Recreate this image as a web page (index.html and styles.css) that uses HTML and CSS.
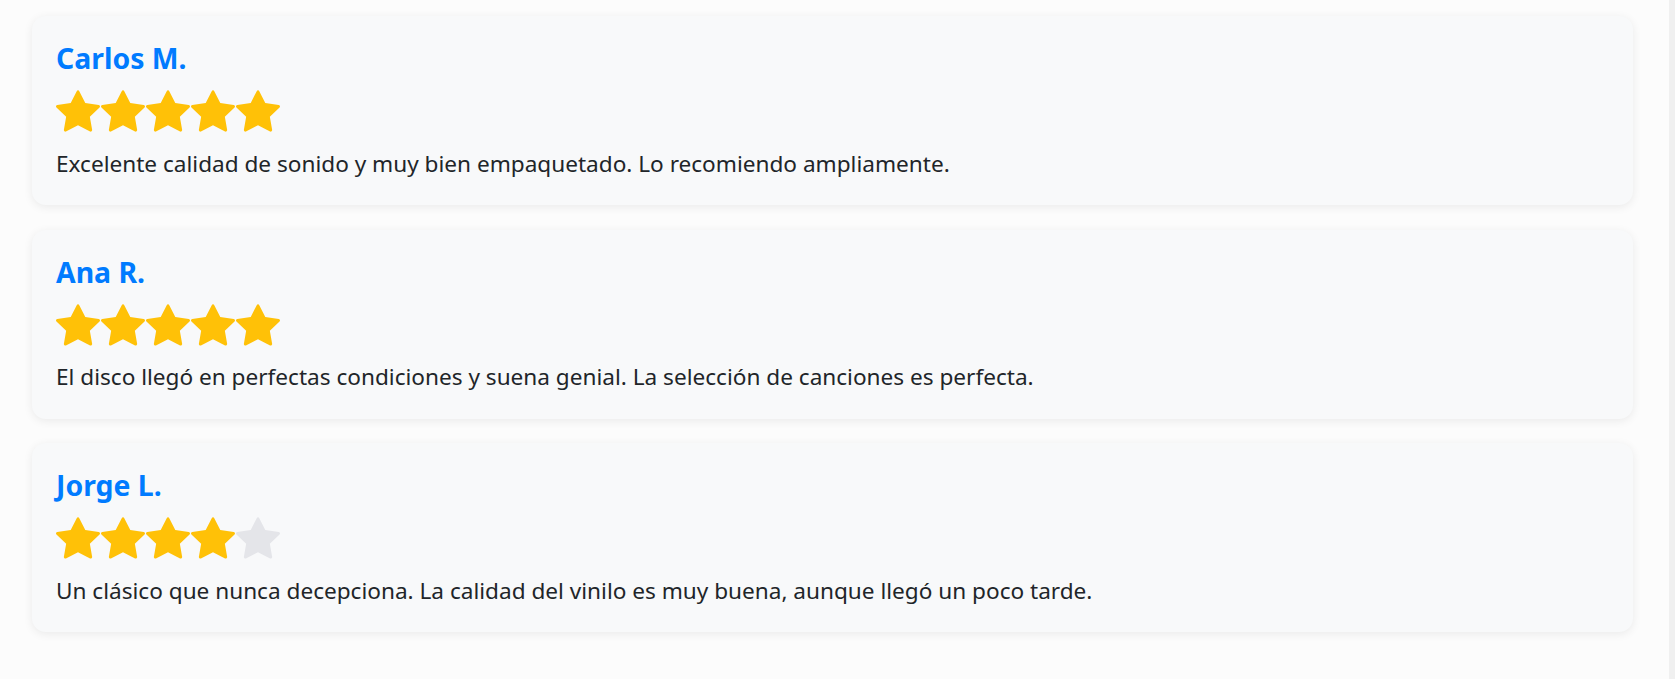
FILE: index.html
```html
<!DOCTYPE html>
<html lang="es">
<head>
<meta charset="utf-8">
<title>Reseñas</title>
<link rel="stylesheet" href="styles.css">
</head>
<body>
<div class="page">
  <main class="reviews">
    <article class="review">
      <h3 class="review-name">Carlos M.</h3>
      <div class="stars">
        <svg class="star on" viewBox="0 0 16 16"><path d="M3.612 15.443c-.386.198-.824-.149-.746-.592l.83-4.73L.173 6.765c-.329-.314-.158-.888.283-.95l4.898-.696L7.538.792c.197-.39.73-.39.927 0l2.184 4.327 4.898.696c.441.062.612.636.282.95l-3.522 3.356.83 4.73c.078.443-.36.79-.746.592L8 13.187l-4.389 2.256z"/></svg>
        <svg class="star on" viewBox="0 0 16 16"><path d="M3.612 15.443c-.386.198-.824-.149-.746-.592l.83-4.73L.173 6.765c-.329-.314-.158-.888.283-.95l4.898-.696L7.538.792c.197-.39.73-.39.927 0l2.184 4.327 4.898.696c.441.062.612.636.282.95l-3.522 3.356.83 4.73c.078.443-.36.79-.746.592L8 13.187l-4.389 2.256z"/></svg>
        <svg class="star on" viewBox="0 0 16 16"><path d="M3.612 15.443c-.386.198-.824-.149-.746-.592l.83-4.73L.173 6.765c-.329-.314-.158-.888.283-.95l4.898-.696L7.538.792c.197-.39.73-.39.927 0l2.184 4.327 4.898.696c.441.062.612.636.282.95l-3.522 3.356.83 4.73c.078.443-.36.79-.746.592L8 13.187l-4.389 2.256z"/></svg>
        <svg class="star on" viewBox="0 0 16 16"><path d="M3.612 15.443c-.386.198-.824-.149-.746-.592l.83-4.73L.173 6.765c-.329-.314-.158-.888.283-.95l4.898-.696L7.538.792c.197-.39.73-.39.927 0l2.184 4.327 4.898.696c.441.062.612.636.282.95l-3.522 3.356.83 4.73c.078.443-.36.79-.746.592L8 13.187l-4.389 2.256z"/></svg>
        <svg class="star on" viewBox="0 0 16 16"><path d="M3.612 15.443c-.386.198-.824-.149-.746-.592l.83-4.73L.173 6.765c-.329-.314-.158-.888.283-.95l4.898-.696L7.538.792c.197-.39.73-.39.927 0l2.184 4.327 4.898.696c.441.062.612.636.282.95l-3.522 3.356.83 4.73c.078.443-.36.79-.746.592L8 13.187l-4.389 2.256z"/></svg>
      </div>
      <p class="review-text">Excelente calidad de sonido y muy bien empaquetado. Lo recomiendo ampliamente.</p>
    </article>
    <article class="review">
      <h3 class="review-name">Ana R.</h3>
      <div class="stars">
        <svg class="star on" viewBox="0 0 16 16"><path d="M3.612 15.443c-.386.198-.824-.149-.746-.592l.83-4.73L.173 6.765c-.329-.314-.158-.888.283-.95l4.898-.696L7.538.792c.197-.39.73-.39.927 0l2.184 4.327 4.898.696c.441.062.612.636.282.95l-3.522 3.356.83 4.73c.078.443-.36.79-.746.592L8 13.187l-4.389 2.256z"/></svg>
        <svg class="star on" viewBox="0 0 16 16"><path d="M3.612 15.443c-.386.198-.824-.149-.746-.592l.83-4.73L.173 6.765c-.329-.314-.158-.888.283-.95l4.898-.696L7.538.792c.197-.39.73-.39.927 0l2.184 4.327 4.898.696c.441.062.612.636.282.95l-3.522 3.356.83 4.73c.078.443-.36.79-.746.592L8 13.187l-4.389 2.256z"/></svg>
        <svg class="star on" viewBox="0 0 16 16"><path d="M3.612 15.443c-.386.198-.824-.149-.746-.592l.83-4.73L.173 6.765c-.329-.314-.158-.888.283-.95l4.898-.696L7.538.792c.197-.39.73-.39.927 0l2.184 4.327 4.898.696c.441.062.612.636.282.95l-3.522 3.356.83 4.73c.078.443-.36.79-.746.592L8 13.187l-4.389 2.256z"/></svg>
        <svg class="star on" viewBox="0 0 16 16"><path d="M3.612 15.443c-.386.198-.824-.149-.746-.592l.83-4.73L.173 6.765c-.329-.314-.158-.888.283-.95l4.898-.696L7.538.792c.197-.39.73-.39.927 0l2.184 4.327 4.898.696c.441.062.612.636.282.95l-3.522 3.356.83 4.73c.078.443-.36.79-.746.592L8 13.187l-4.389 2.256z"/></svg>
        <svg class="star on" viewBox="0 0 16 16"><path d="M3.612 15.443c-.386.198-.824-.149-.746-.592l.83-4.73L.173 6.765c-.329-.314-.158-.888.283-.95l4.898-.696L7.538.792c.197-.39.73-.39.927 0l2.184 4.327 4.898.696c.441.062.612.636.282.95l-3.522 3.356.83 4.73c.078.443-.36.79-.746.592L8 13.187l-4.389 2.256z"/></svg>
      </div>
      <p class="review-text">El disco llegó en perfectas condiciones y suena genial. La selección de canciones es perfecta.</p>
    </article>
    <article class="review">
      <h3 class="review-name">Jorge L.</h3>
      <div class="stars">
        <svg class="star on" viewBox="0 0 16 16"><path d="M3.612 15.443c-.386.198-.824-.149-.746-.592l.83-4.73L.173 6.765c-.329-.314-.158-.888.283-.95l4.898-.696L7.538.792c.197-.39.73-.39.927 0l2.184 4.327 4.898.696c.441.062.612.636.282.95l-3.522 3.356.83 4.73c.078.443-.36.79-.746.592L8 13.187l-4.389 2.256z"/></svg>
        <svg class="star on" viewBox="0 0 16 16"><path d="M3.612 15.443c-.386.198-.824-.149-.746-.592l.83-4.73L.173 6.765c-.329-.314-.158-.888.283-.95l4.898-.696L7.538.792c.197-.39.73-.39.927 0l2.184 4.327 4.898.696c.441.062.612.636.282.95l-3.522 3.356.83 4.73c.078.443-.36.79-.746.592L8 13.187l-4.389 2.256z"/></svg>
        <svg class="star on" viewBox="0 0 16 16"><path d="M3.612 15.443c-.386.198-.824-.149-.746-.592l.83-4.73L.173 6.765c-.329-.314-.158-.888.283-.95l4.898-.696L7.538.792c.197-.39.73-.39.927 0l2.184 4.327 4.898.696c.441.062.612.636.282.95l-3.522 3.356.83 4.73c.078.443-.36.79-.746.592L8 13.187l-4.389 2.256z"/></svg>
        <svg class="star on" viewBox="0 0 16 16"><path d="M3.612 15.443c-.386.198-.824-.149-.746-.592l.83-4.73L.173 6.765c-.329-.314-.158-.888.283-.95l4.898-.696L7.538.792c.197-.39.73-.39.927 0l2.184 4.327 4.898.696c.441.062.612.636.282.95l-3.522 3.356.83 4.73c.078.443-.36.79-.746.592L8 13.187l-4.389 2.256z"/></svg>
        <svg class="star off" viewBox="0 0 16 16"><path d="M3.612 15.443c-.386.198-.824-.149-.746-.592l.83-4.73L.173 6.765c-.329-.314-.158-.888.283-.95l4.898-.696L7.538.792c.197-.39.73-.39.927 0l2.184 4.327 4.898.696c.441.062.612.636.282.95l-3.522 3.356.83 4.73c.078.443-.36.79-.746.592L8 13.187l-4.389 2.256z"/></svg>
      </div>
      <p class="review-text">Un clásico que nunca decepciona. La calidad del vinilo es muy buena, aunque llegó un poco tarde.</p>
    </article>
  </main>
  <div class="scroll-track"></div>
</div>
</body>
</html>
```
FILE: styles.css
```css
html, body {
  margin: 0;
  padding: 0;
  height: 100%;
}

body {
  background: #fcfcfc;
  font-family: "Noto Sans", "Open Sans", sans-serif;
  color: #212529;
  overflow: hidden;
}

.page {
  display: flex;
  min-height: 100%;
}

.reviews {
  flex: 1;
  display: flex;
  flex-direction: column;
  gap: 24.5px;
  padding: 16px 36px 0 32px;
}

.review {
  background: #f8f9fa;
  border-radius: 14px;
  box-shadow: 0 2px 10px rgba(0, 0, 0, 0.075);
  padding: 25px 24px 25px 24px;
}

.review-name {
  margin: 0;
  font-size: 28.4px;
  line-height: 34px;
  font-weight: 700;
  color: #007bff;
}

.stars {
  display: flex;
  gap: 1px;
  height: 44px;
  margin-top: 14px;
}

.star {
  width: 44px;
  height: 44px;
  display: block;
}

.star.on {
  fill: #ffc107;
}

.star.off {
  fill: #e4e5e9;
}

.review-text {
  margin: 13.5px 0 0 0;
  font-size: 22.6px;
  line-height: 33.6px;
}

.scroll-track {
  width: 6px;
  flex: none;
  background: #f0f0f0;
}
```
